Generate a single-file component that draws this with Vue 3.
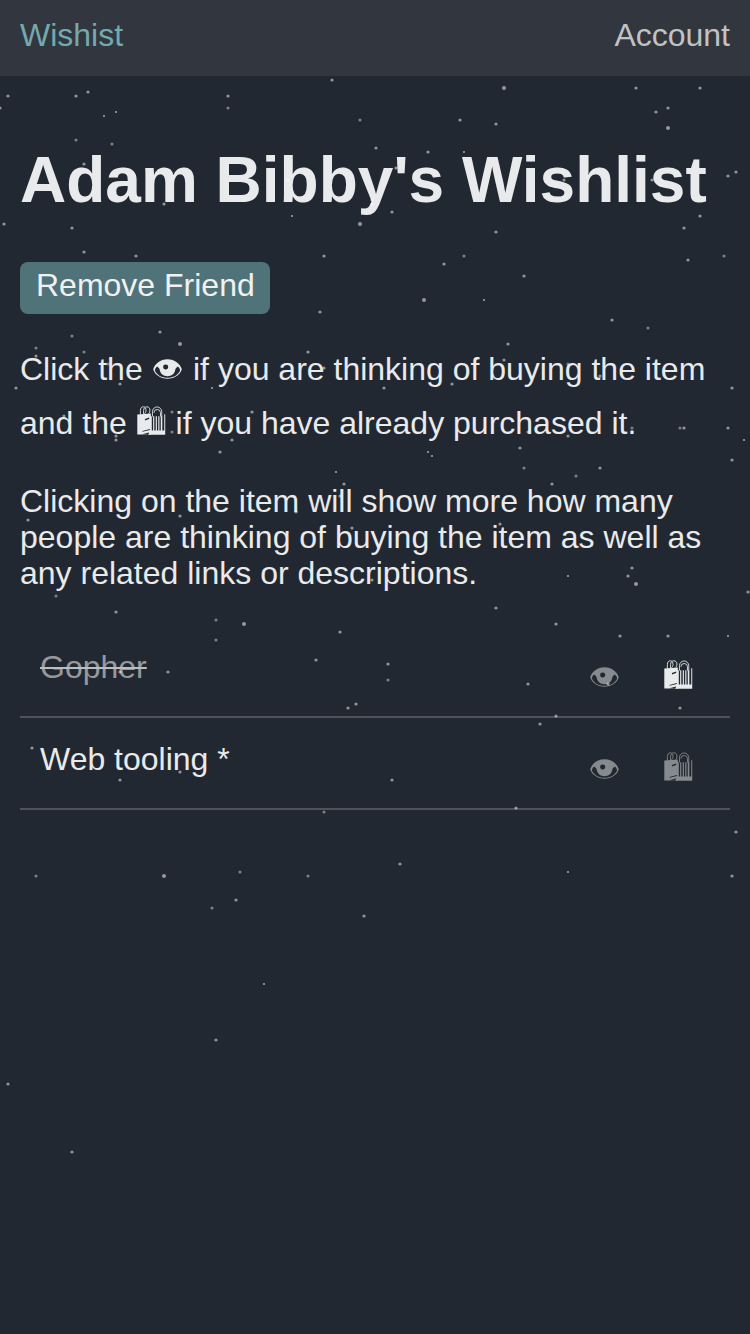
<script setup>
const items = [
  { name: 'Gopher', done: true, watching: false, bought: true },
  { name: 'Web tooling *', done: false, watching: false, bought: false }
]

// Star positions as [x, y], grouped by brightness and radius.
const stars = [
  {
    r: 1.6, o: 0.5,
    points: [
      [8, 96], [76, 96], [88, 92], [228, 96], [0, 108], [84, 164], [164, 204], [4, 224], [72, 228], [84, 252], [136, 256], [160, 332],
      [332, 80], [460, 120], [496, 124], [376, 148], [428, 152], [396, 168], [288, 180], [372, 200], [372, 204], [392, 212], [496, 232],
      [324, 256], [444, 264], [636, 88], [700, 88], [668, 108], [656, 112], [736, 172], [728, 176], [564, 180], [652, 180], [700, 216],
      [684, 228], [688, 260], [524, 276], [612, 320], [320, 312], [36, 356], [120, 384], [16, 388], [64, 416], [116, 436], [116, 440],
      [232, 440], [220, 452], [180, 516], [28, 520], [116, 612], [308, 352], [324, 368], [384, 388], [452, 384], [252, 412], [344, 484],
      [340, 496], [296, 512], [352, 528], [500, 524], [372, 580], [508, 344], [504, 360], [600, 376], [732, 388], [684, 428],
      [728, 428], [528, 432], [568, 436], [520, 448], [732, 460], [600, 468], [552, 484], [632, 568], [628, 576], [748, 592], [340, 632],
      [316, 660], [120, 672], [168, 672], [356, 704], [348, 708], [32, 748], [180, 772], [120, 780], [236, 900], [364, 916],
      [496, 608], [556, 624], [620, 636], [668, 636], [388, 664], [528, 684], [608, 684], [680, 708], [556, 716], [540, 724], [392, 780],
      [516, 808], [736, 832], [400, 864], [732, 876], [216, 1040], [8, 1084], [72, 1152]
    ]
  },
  {
    r: 1.6, o: 0.4,
    points: [
      [228, 108], [76, 140], [112, 144], [72, 336], [360, 120], [464, 256], [724, 256], [648, 328], [36, 348], [84, 352], [108, 364],
      [172, 412], [172, 432], [56, 596], [216, 620], [568, 364], [632, 428], [680, 428], [524, 468], [576, 476], [216, 640], [388, 680],
      [324, 812], [36, 876], [240, 872], [308, 876], [212, 908]
    ]
  },
  {
    r: 2, o: 0.52,
    points: [[504, 88], [668, 128], [360, 224], [424, 300], [180, 344], [636, 584], [244, 624], [164, 876]]
  },
  {
    r: 1.1, o: 0.55,
    points: [
      [116, 112], [104, 116], [464, 152], [292, 216], [484, 300], [212, 388], [428, 452], [432, 456], [336, 472], [744, 440],
      [568, 576], [728, 636], [568, 872], [264, 984]
    ]
  }
]
</script>

<template>
  <div class="page">
    <svg class="defs" width="0" height="0" aria-hidden="true">
      <symbol id="eye" viewBox="0 0 30 21" preserveAspectRatio="none">
        <path
          fill-rule="evenodd"
          d="M.2 10.800C2 4.800 7.500.2 15 .2S28 4.800 29.800 10.800C28 16.800 22 20.700 15 20.700S2 16.800.2 10.800ZM4.200 8C2.800 9.200 2.200 10.600 2 12 4 16.900 9 19.700 15 19.700S26 16.900 28 12C27.800 10.600 27.200 9.200 25.800 8 24.300 9 23.300 10 23 11.500 22.300 15.600 19.200 18 15 18S7.700 15.600 7 11.500C6.700 10 5.700 9 4.200 8ZM15.700 8.500a2.600 2.600 0 1 0-5.200 0 2.600 2.600 0 0 0 5.200 0Z"
        />
      </symbol>
      <symbol id="bags" viewBox="0 0 30 30" preserveAspectRatio="none">
        <g fill="none" stroke="currentColor" stroke-width="0.9">
          <path d="M3.500 9V4.800C3.500 2.200 4.800.8 6.500.8S9.300 2.200 9.300 4.500C9.300 6.500 8.500 7.500 7.500 8.300" />
          <path d="M6.800 8.500V4.800C6.800 2.300 8.300.8 10.200.8S13.400 2.200 13.400 4.300C13.400 6 13 7 12.200 8" />
          <path d="M16 11V5.800a4.800 4.800 0 0 1 9.600 0V11" />
          <path d="M17.500 7a3.400 3.400 0 0 1 6.800 0v4" />
        </g>
        <path fill-rule="evenodd" d="M.3 8.900 14.300 7.700V29.600H.3ZM8.200 13.400v1.600L12.600 13.500v-1.700ZM5.700 25.800v.9L13.300 24.700v-.9ZM6.500 28.900v.8h4L13.300 28.100v-1Z" />
        <path d="M12.800 25.300h15.400V8.600h1V29.700H12ZM13.500 10.500h1.800V26h-1.800ZM16.700 10.500h1.200V26h-1.200ZM19.400 10.500h1.200V26h-1.200ZM22 10.500h1.200V26H22ZM24.600 10.500h1.600V26h-1.600Z" />
      </symbol>
    </svg>

    <nav class="nav">
      <a class="brand">Wishist</a>
      <a class="account">Account</a>
    </nav>

    <main class="content">
      <h1 class="title">Adam Bibby's Wishlist</h1>
      <button class="remove">Remove Friend</button>
      <p class="hint">
        Click the <svg class="glyph eye"><use href="#eye" /></svg> if you are thinking of buying the item<br />
        and the <svg class="glyph bags"><use href="#bags" /></svg> if you have already purchased it.
      </p>
      <p class="info">
        Clicking on the item will show more how many people are thinking of buying the item as well as any related links or descriptions.
      </p>
      <ul class="list">
        <li v-for="item in items" :key="item.name" class="row">
          <span :class="['name', { done: item.done }]">{{ item.name }}</span>
          <svg :class="['icon', 'eye', { active: item.watching }]"><use href="#eye" /></svg>
          <svg :class="['icon', 'bags', { active: item.bought }]"><use href="#bags" /></svg>
        </li>
      </ul>
    </main>

    <svg class="stars" width="750" height="1334" viewBox="0 0 750 1334" aria-hidden="true">
      <g v-for="(group, i) in stars" :key="i" fill="#fff" :fill-opacity="group.o">
        <circle v-for="(p, j) in group.points" :key="j" :cx="p[0]" :cy="p[1]" :r="group.r" />
      </g>
    </svg>
  </div>
</template>

<style>
body {
  background: #222831;
}
</style>

<style scoped>
.page {
  position: relative;
  box-sizing: border-box;
  width: 750px;
  height: 1334px;
  overflow: hidden;
  background: #222831;
  color: #e9eaeb;
  font-family: "Liberation Sans", Arial, sans-serif;
  font-size: 32px;
  line-height: 36px;
}
.defs {
  position: absolute;
}
.stars {
  position: absolute;
  inset: 0;
  pointer-events: none;
}
.nav {
  display: flex;
  justify-content: space-between;
  box-sizing: border-box;
  height: 76px;
  padding: 17px 20px 0;
  background: #32363f;
}
.brand {
  color: #72aaad;
}
.account {
  color: #c1c2c4;
}
.content {
  display: flex;
  flex-direction: column;
  align-items: flex-start;
  padding: 68px 20px 0;
}
.title {
  margin: 0;
  font-size: 64px;
  line-height: 72px;
  font-weight: 700;
  white-space: nowrap;
}
.remove {
  width: 250px;
  height: 52px;
  margin: 46px 0 0;
  padding: 5px 0 11px 16px;
  border: 0;
  border-radius: 8px;
  background: #50737a;
  color: #f0f1f2;
  font: inherit;
  text-align: left;
  white-space: nowrap;
}
.hint {
  margin: 28px 0 0;
  line-height: 54px;
  white-space: nowrap;
}
.glyph,
.icon {
  fill: currentColor;
}
.eye {
  width: 29px;
  height: 20px;
}
.bags {
  width: 29px;
  height: 29px;
}
.glyph {
  vertical-align: baseline;
}
.glyph.eye {
  margin: 0 2px 1px 1.500px;
}
.glyph.bags {
  margin: 0 1px -1px 1px;
}
.info {
  margin: 33px 0 0;
}
.list {
  align-self: stretch;
  margin: 35px 0 0;
  padding: 0;
  list-style: none;
}
.row {
  display: flex;
  align-items: flex-start;
  box-sizing: border-box;
  height: 92px;
  padding: 23px 37px 0 20px;
  border-bottom: 2px solid #4f5359;
}
.name {
  flex: 1;
}
.name.done {
  flex: none;
  margin-right: auto;
  color: #96989c;
  text-decoration: line-through #bcbdbf 2px;
}
.icon {
  color: #86898d;
}
.icon.active {
  color: #e9eaeb;
}
.icon.eye {
  margin: 18px 45px 0 0;
}
.icon.bags {
  margin-top: 11px;
}
</style>
